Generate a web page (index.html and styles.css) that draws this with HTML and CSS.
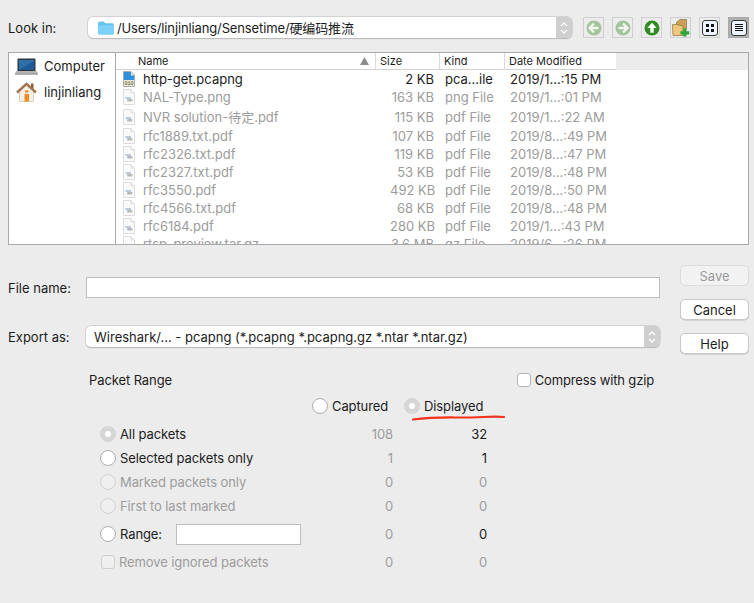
FILE: index.html
```html
<!DOCTYPE html>
<html lang="en">
<head>
<meta charset="utf-8">
<title>Export</title>
<link rel="stylesheet" href="styles.css">
</head>
<body>
<svg class="defs" width="0" height="0" aria-hidden="true">
  <symbol id="doc" viewBox="0 0 12 16">
    <path d="M.5.5H8L11.5 4V15.5H.5Z" fill="#fafafa" stroke="#dcdcdc"/>
    <path d="M8 .5V4H11.5" fill="#efefef" stroke="#dcdcdc"/>
    <rect x="2.5" y="8" width="5.500" height="2" fill="#bccbdc"/>
    <rect x="4" y="10" width="5.500" height="2.500" rx="1" fill="#b8b8b8"/>
  </symbol>
</svg>
<main class="dialog">
  <div class="lookin">
    <span class="lbl lookin-lbl">Look in:</span>
    <div class="combo path-combo">
      <svg class="folder" width="16" height="14" viewBox="0 0 17 14"><path d="M0 2q0-2 2-2h4l2 2h7q2 0 2 2v8q0 2-2 2H2q-2 0-2-2Z" fill="#66c4f2"/><path d="M0 4h17v8q0 2-2 2H2q-2 0-2-2Z" fill="#7dd0f7"/></svg>
      <span class="path-text">/Users/linjinliang/Sensetime/硬编码推流</span>
      <span class="stepper"><svg width="8" height="14" viewBox="0 0 8 14"><path d="M1 5l3-3 3 3M1 9l3 3 3-3" fill="none" stroke="#fff" stroke-width="1.3"/></svg></span>
    </div>
    <div class="tools">
      <span class="tool"><svg width="16" height="16" viewBox="0 0 16 16"><circle cx="8" cy="8" r="7.5" fill="#a3c49b"/><path d="M8 3.5 3.5 8 8 12.5M4 8h8.500" fill="none" stroke="#f1f6ef" stroke-width="2.400"/></svg></span>
      <span class="tool"><svg width="16" height="16" viewBox="0 0 16 16"><circle cx="8" cy="8" r="7.500" fill="#a3c49b"/><path d="M8 3.500 12.500 8 8 12.500M12 8H3.500" fill="none" stroke="#f1f6ef" stroke-width="2.400"/></svg></span>
      <span class="tool"><svg width="16" height="16" viewBox="0 0 16 16"><circle cx="8" cy="8" r="7.500" fill="#2f8a22"/><path d="M8 2.800 12.700 8H9.700V12.800H6.300V8H3.300Z" fill="#fff"/></svg></span>
      <span class="tool"><svg width="19" height="19" viewBox="0 0 19 19"><path d="M5 5 9 1.500H15.500V11L12 14Z" fill="#c9a258" stroke="#8d7038" stroke-width=".7"/><path d="M1.500 6.500H5.500L12 8V17.500H2Z" fill="#eec77c" stroke="#8d7038" stroke-width=".7"/><path d="M12.200 10.500h3.300v2.800h2.800v3.300h-2.800v2h-3.300v-2h-2.800v-3.300h2.800Z" fill="#2fa53c"/></svg></span>
      <span class="tool"><span class="viewbtn"><svg width="10" height="10" viewBox="0 0 10 10"><path d="M1 1h3v3H1zM6 1h3v3H6zM1 6h3v3H1zM6 6h3v3H6z" fill="#111"/></svg></span></span>
      <span class="tool tool-on"><span class="viewbtn"><svg width="10" height="10" viewBox="0 0 10 10"><path d="M1 1.500h8M1 3.500h8M1 5.500h8M1 7.500h8" stroke="#111"/></svg></span></span>
    </div>
  </div>

  <section class="browser">
    <aside class="places">
      <div class="place">
        <svg width="23" height="17" viewBox="0 0 23 17"><path d="M3.500 .5H19.500Q20.500 .5 20.500 1.500V13H2.500V1.500Q2.500 .5 3.500 .5Z" fill="#2e3238"/><path d="M3.800 1.800H19.200V12H3.800Z" fill="#2f6fa8"/><path d="M3.800 12 19.200 3V12Z" fill="#1e5a96"/><path d="M1.500 13H21.500L23 15.500H0Z" fill="#b4b4b4"/><path d="M0 15.500H23V16.500H0Z" fill="#6e6e6e"/></svg>
        <span>Computer</span>
      </div>
      <div class="place">
        <svg width="22" height="22" viewBox="0 0 22 22"><rect x="15.500" y="2.500" width="2.500" height="5" fill="#8d5a3a"/><path d="M4 10V20.500H18V10L11 4Z" fill="#f5f1e4" stroke="#c9bda8" stroke-width=".7"/><path d="M1.500 11.500 11 2.800 20.500 11.500" fill="none" stroke="#a4744e" stroke-width="2.400"/><rect x="9" y="13" width="4.500" height="7.500" fill="#ee8a20"/><rect x="9.800" y="9.300" width="3" height="2.400" fill="#ee8a20"/></svg>
        <span>linjinliang</span>
      </div>
    </aside>
    <div class="tree">
      <div class="thead">
        <div class="th th-name">Name<svg width="9" height="8" viewBox="0 0 9 8"><path d="M4.500 0 9 8H0Z" fill="#8c8c8c"/></svg></div>
        <div class="th th-size">Size</div>
        <div class="th th-kind">Kind</div>
        <div class="th th-date">Date Modified</div>
      </div>
      <div class="row row-on">
        <svg class="ficon" width="12" height="16" viewBox="0 0 12 16"><path d="M.5.500H8L11.500 4V15.500H.5Z" fill="#efe9cf" stroke="#aaa"/><path d="M1 1H8V4.500H11V9H1Z" fill="#2f8fdc"/><text x="6" y="14" class="bits">010</text></svg>
        <span class="c-name">http-get.pcapng</span><span class="c-size">2 KB</span><span class="c-kind">pca...ile</span><span class="c-date">2019/1...:15 PM</span>
      </div>
      <div class="row"><svg class="ficon" width="12" height="16"><use href="#doc"/></svg><span class="c-name">NAL-Type.png</span><span class="c-size">163 KB</span><span class="c-kind">png File</span><span class="c-date">2019/1...:01 PM</span></div>
      <div class="row row-cjk"><svg class="ficon" width="12" height="16"><use href="#doc"/></svg><span class="c-name">NVR solution-待定.pdf</span><span class="c-size">115 KB</span><span class="c-kind">pdf File</span><span class="c-date">2019/1...:22 AM</span></div>
      <div class="row"><svg class="ficon" width="12" height="16"><use href="#doc"/></svg><span class="c-name">rfc1889.txt.pdf</span><span class="c-size">107 KB</span><span class="c-kind">pdf File</span><span class="c-date">2019/8...:49 PM</span></div>
      <div class="row"><svg class="ficon" width="12" height="16"><use href="#doc"/></svg><span class="c-name">rfc2326.txt.pdf</span><span class="c-size">119 KB</span><span class="c-kind">pdf File</span><span class="c-date">2019/8...:47 PM</span></div>
      <div class="row"><svg class="ficon" width="12" height="16"><use href="#doc"/></svg><span class="c-name">rfc2327.txt.pdf</span><span class="c-size">53 KB</span><span class="c-kind">pdf File</span><span class="c-date">2019/8...:48 PM</span></div>
      <div class="row"><svg class="ficon" width="12" height="16"><use href="#doc"/></svg><span class="c-name">rfc3550.pdf</span><span class="c-size">492 KB</span><span class="c-kind">pdf File</span><span class="c-date">2019/8...:50 PM</span></div>
      <div class="row"><svg class="ficon" width="12" height="16"><use href="#doc"/></svg><span class="c-name">rfc4566.txt.pdf</span><span class="c-size">68 KB</span><span class="c-kind">pdf File</span><span class="c-date">2019/8...:48 PM</span></div>
      <div class="row"><svg class="ficon" width="12" height="16"><use href="#doc"/></svg><span class="c-name">rfc6184.pdf</span><span class="c-size">280 KB</span><span class="c-kind">pdf File</span><span class="c-date">2019/1...:43 PM</span></div>
      <div class="row"><svg class="ficon" width="12" height="16"><use href="#doc"/></svg><span class="c-name">rtsp_preview.tar.gz</span><span class="c-size">3.6 MB</span><span class="c-kind">gz File</span><span class="c-date">2019/6...:26 PM</span></div>
    </div>
  </section>

  <section class="form">
    <div class="fields">
      <div class="field">
        <span class="lbl field-lbl">File name:</span>
        <input class="text-input" type="text" aria-label="File name">
      </div>
      <div class="field">
        <span class="lbl field-lbl">Export as:</span>
        <div class="combo type-combo">
          <span class="type-text">Wireshark/... - pcapng (*.pcapng *.pcapng.gz *.ntar *.ntar.gz)</span>
          <span class="stepper stepper-sm"><svg width="8" height="14" viewBox="0 0 8 14"><path d="M1 5l3-3 3 3M1 9l3 3 3-3" fill="none" stroke="#fff" stroke-width="1.300"/></svg></span>
        </div>
      </div>
    </div>
    <div class="actions">
      <button class="btn btn-off" type="button">Save</button>
      <button class="btn" type="button">Cancel</button>
      <button class="btn" type="button">Help</button>
    </div>
  </section>

  <section class="range">
    <div class="range-top">
      <span class="lbl">Packet Range</span>
      <label class="compress"><span class="check"></span><span class="lbl">Compress with gzip</span></label>
    </div>
    <div class="mode">
      <span class="radio-item mode-cap"><span class="radio"></span><span class="lbl">Captured</span></span>
      <span class="radio-item mode-dis"><span class="radio radio-on"></span><span class="lbl">Displayed</span></span>
      <svg class="scribble" width="96" height="8" viewBox="0 0 96 8"><path d="M1 5.500C20 3 30 3.500 50 3.500S80 2 92 3" fill="none" stroke="#f3311c" stroke-width="2.200" stroke-linecap="round"/></svg>
    </div>
    <div class="grid">
      <span class="radio-item"><span class="radio radio-on"></span><span class="lbl">All packets</span></span><span class="num dim">108</span><span class="num">32</span>
      <span class="radio-item"><span class="radio"></span><span class="lbl">Selected packets only</span></span><span class="num dim">1</span><span class="num">1</span>
      <span class="radio-item dim"><span class="radio radio-off"></span><span class="lbl">Marked packets only</span></span><span class="num dim">0</span><span class="num dim">0</span>
      <span class="radio-item dim"><span class="radio radio-off"></span><span class="lbl">First to last marked</span></span><span class="num dim">0</span><span class="num dim">0</span>
      <span class="radio-item tall"><span class="radio"></span><span class="lbl range-lbl">Range:</span><input class="range-input" type="text" aria-label="Range"></span><span class="num dim tall">0</span><span class="num tall">0</span>
      <span class="radio-item dim"><span class="check check-off"></span><span class="lbl remove-lbl">Remove ignored packets</span></span><span class="num dim">0</span><span class="num dim">0</span>
    </div>
  </section>
</main>
</body>
</html>
```
FILE: styles.css
```css
* { box-sizing: border-box; }
html, body { margin: 0; padding: 0; }
body {
  width: 754px;
  height: 603px;
  overflow: hidden;
  background: #ececec;
  color: #1c1c1c;
  font: 13px/16px Inter, "Noto Sans CJK SC", sans-serif;
}
.defs { position: absolute; }
.lbl { white-space: nowrap; }
.dim { color: #9c9c9c; }

.dialog { padding: 17px 5px 0 8px; }

/* top row */
.lookin { display: flex; align-items: center; height: 21px; }
.lookin-lbl { width: 80px; }
.combo {
  display: flex;
  align-items: center;
  height: 21px;
  background: #fff;
  border-radius: 5px;
  box-shadow: 0 0 0 .5px #bdbdbd, 0 .5px 1px #b5b5b5;
  overflow: hidden;
}
.path-combo { width: 484px; padding-left: 10px; }
.folder { flex: none; }
.path-text { margin-left: 3px; flex: 1; white-space: nowrap; letter-spacing: -.13px; }
.stepper {
  flex: none;
  width: 16px;
  height: 21px;
  background: #cfcfcf;
  display: flex;
  align-items: center;
  justify-content: center;
}
.tools { display: flex; gap: 8px; margin-left: 11px; }
.tool {
  width: 21px;
  height: 21px;
  border: 1px solid #d0d0d0;
  display: flex;
  align-items: center;
  justify-content: center;
}
.tool-on { background: #b0b0b0; border-color: #a8a8a8; }
.viewbtn {
  width: 16px;
  height: 16px;
  border: 1px solid #333;
  border-radius: 3px;
  background: #eef4fd;
  display: flex;
  align-items: center;
  justify-content: center;
}

/* file browser */
.browser {
  display: flex;
  height: 193px;
  margin-top: 14px;
  border: 1px solid #a9a9a9;
  background: #fff;
}
.places { width: 107px; flex: none; border-right: 1px solid #a9a9a9; padding: 0 0 0 6px; }
.place { display: flex; align-items: center; gap: 6px; height: 26px; font-size: 13px; }
.place svg { flex: none; width: 23px; }
.tree { flex: 1; min-width: 0; overflow: hidden; }
.thead { display: flex; height: 17px; background: #ececec; }
.th {
  background: #fff;
  border-bottom: 1px solid #d2d2d2;
  font-size: 11px;
  line-height: 16px;
  white-space: nowrap;
}
.th-name { width: 260px; padding-left: 22px; display: flex; justify-content: space-between; align-items: center; padding-right: 6px; border-right: 1px solid #dadada; }
.th-size { width: 64px; padding-left: 4px; border-right: 1px solid #dadada; }
.th-kind { width: 65px; padding-left: 4px; border-right: 1px solid #dadada; }
.th-date { width: 111px; padding-left: 4px; }
.row {
  display: flex;
  align-items: center;
  height: 18px;
  color: #9c9c9c;
  white-space: nowrap;
}
.row-cjk { height: 21px; }
.row-on { color: #1c1c1c; }
.ficon { flex: none; margin: 0 8px 0 7px; }
.c-name { width: 247px; }
.c-size { width: 44px; text-align: right; margin-right: 11px; }
.c-kind { width: 65px; }
.c-date { width: 130px; }
.bits { font: 5px "Liberation Mono", monospace; fill: #444; text-anchor: middle; }

/* form */
.form { display: flex; gap: 20px; margin-top: 20px; }
.fields { width: 652px; padding-top: 12px; display: flex; flex-direction: column; gap: 28px; }
.field { display: flex; align-items: center; height: 21px; }
.field-lbl { width: 78px; flex: none; }
.text-input { flex: 1; height: 21px; border: 1px solid #bdbdbd; background: #fff; padding: 0; margin: 0; outline: 0; }
.type-combo { flex: 1; padding-left: 8px; }
.type-text { flex: 1; white-space: nowrap; }
.stepper-sm { width: 16px; }
.actions { width: 69px; display: flex; flex-direction: column; gap: 13px; }
.btn {
  height: 21px;
  padding: 0;
  border: 1px solid #c8c8c8;
  border-radius: 5px;
  background: #fff;
  color: #1c1c1c;
  font: inherit;
  box-shadow: 0 .5px .5px #bbb;
}
.btn-off { background: #f2f2f2; color: #9c9c9c; border-color: #dcdcdc; box-shadow: none; }

/* packet range */
.range { margin: 18px 0 0 81px; width: 565px; letter-spacing: -.1px; }
.range-top { display: flex; justify-content: space-between; align-items: center; height: 16px; }
.compress { display: flex; align-items: center; gap: 4px; margin-top: -1px; letter-spacing: -.15px; }
.check {
  width: 14px;
  height: 14px;
  flex: none;
  background: #fff;
  border: 1px solid #b5b5b5;
  border-radius: 3px;
}
.check-off { background: #efefef; border-color: #d0d0d0; margin-left: 1px; }
.mode { position: relative; height: 16px; margin-top: 10px; }
.radio-item { display: flex; align-items: center; gap: 4px; white-space: nowrap; }
.mode-cap, .mode-dis { position: absolute; top: 0; }
.mode-cap { left: 223px; }
.mode-dis { left: 315px; }
.scribble { position: absolute; left: 323px; top: 16px; }
.radio {
  width: 16px;
  height: 16px;
  flex: none;
  border-radius: 50%;
  background: #fff;
  border: 1px solid #aeaeae;
}
.radio-on { border: 5.500px solid #d6d6d6; background: #fff; }
.radio-off { background: #efefef; border-color: #d2d2d2; }
.grid {
  display: grid;
  grid-template-columns: 263px 30px 94px;
  grid-template-rows: 24px 24px 24px 24px 32px 24px;
  margin: 8px 0 0 11px;
  align-items: center;
}
.num { text-align: right; }
.tall { height: 32px; }
.num.tall { line-height: 32px; }
.range-lbl { width: 52px; }
.range-input { width: 125px; height: 21px; border: 1px solid #bdbdbd; background: #fff; padding: 0; margin: 0; outline: 0; }
```
